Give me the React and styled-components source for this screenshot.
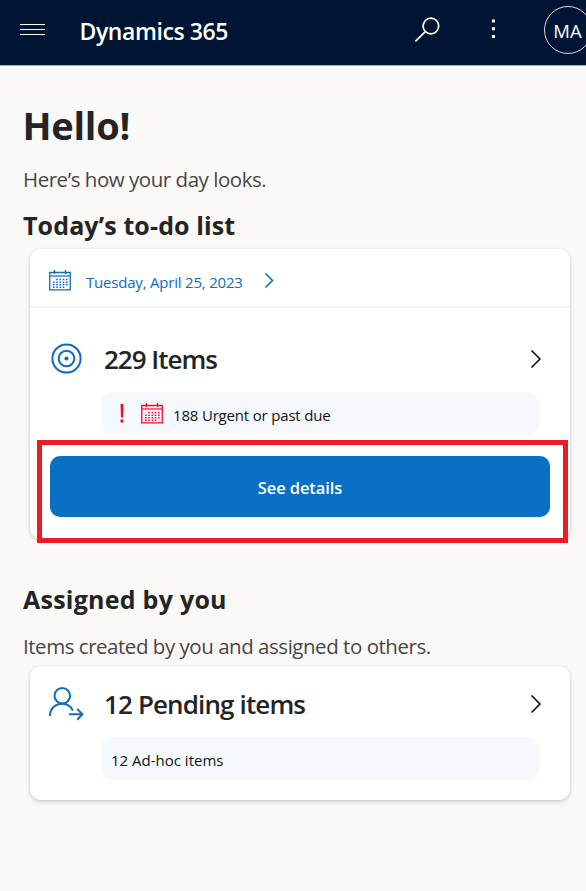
import React from 'react';
import styled, { createGlobalStyle } from 'styled-components';

const Global = createGlobalStyle`
  * { box-sizing: border-box; }
  body { margin: 0; background: #faf9f8; font-family: "Open Sans", "Noto Sans", sans-serif; overflow: hidden; }
  h1, h2, h3, p { margin: 0; }
  button { font: inherit; border: 0; background: none; padding: 0; }
  svg { display: block; flex: none; overflow: visible; }
`;
const Page = styled.div`
  width: 586px;
  height: 891px;
  overflow: hidden;
  color: #242424;
`;
const TopBar = styled.header`
  display: flex;
  align-items: flex-start;
  height: 66px;
  padding-left: 20px;
  background: #001433;
  border-bottom: 1px solid #a3a9b3;
  color: #fff;
`;
const MenuButton = styled.button`
  flex: none;
  margin-top: 23px;
  width: 25px;
`;
const Brand = styled.div`
  flex: none;
  margin-left: 34.5px;
  width: 335px;
  line-height: 63px;
  font-size: 23px;
  font-weight: 600;
  letter-spacing: -0.42px;
`;
const SearchButton = styled.button`
  flex: none;
  margin-top: 17px;
  width: 26px;
`;
const MoreButton = styled.button`
  flex: none;
  margin: 19px 0 0 50px;
  width: 5px;
`;
const Avatar = styled.div`
  flex: none;
  margin: 6px 0 0 48px;
  width: 48px;
  height: 48px;
  border: 1.5px solid #d5d9df;
  border-radius: 50%;
  text-align: center;
  font-size: 18.5px;
  line-height: 47px;
`;
const Main = styled.main`
  padding: 29px 16px 0 23px;
`;
const Greeting = styled.h1`
  margin-left: -0.5px;
  font-size: 38px;
  line-height: 60px;
  font-weight: 700;
  letter-spacing: -0.25px;
`;
const Lead = styled.p`
  padding-top: ${(p) => p.$offset || 0}px;
  height: ${(p) => p.$height}px;
  line-height: ${(p) => p.$line}px;
  font-size: 20.5px;
  letter-spacing: -0.47px;
  color: #484644;
  white-space: nowrap;
`;
const SectionTitle = styled.h2`
  height: ${(p) => p.$height}px;
  line-height: ${(p) => p.$line}px;
  font-size: 25px;
  font-weight: 700;
  letter-spacing: ${(p) => p.$spacing}px;
`;
const Card = styled.section`
  position: relative;
  margin-left: 7px;
  width: 540px;
  height: ${(p) => p.$height}px;
  background: #fff;
  border-radius: 11px;
  box-shadow: 0 2px 4px rgba(0, 0, 0, 0.16), 0 0 2px rgba(0, 0, 0, 0.1);
  margin-bottom: 38px;
`;
const DateRow = styled.div`
  display: flex;
  align-items: center;
  height: 59px;
  padding: 6px 0 0 19px;
  border-bottom: 2px solid #f3f3f3;
  color: #0f6cbd;
`;
const DateText = styled.span`
  margin: 2px 0 0 15px;
  width: 179px;
  font-size: 15px;
  letter-spacing: -0.2px;
  white-space: nowrap;
`;
const SummaryRow = styled.div`
  display: flex;
  align-items: center;
  height: ${(p) => p.$height}px;
  padding: ${(p) => p.$top}px 29.5px 0 19px;
  color: #111;
`;
const IconSlot = styled.div`
  width: 55px;
  padding-left: ${(p) => p.$inset || 0}px;
`;
const SummaryTitle = styled.h3`
  flex: 1;
  font-size: 26px;
  line-height: 36px;
  font-weight: 600;
  letter-spacing: ${(p) => p.$spacing}px;
  color: #242424;
`;
const Pill = styled.div`
  display: flex;
  align-items: center;
  margin-left: 71px;
  width: 439px;
  height: 43px;
  padding: 3px 0 0 ${(p) => p.$inset}px;
  border-radius: 12px;
  background: #f5f9fe;
  color: #111;
  font-size: 15px;
  letter-spacing: ${(p) => p.$spacing}px;
`;
const PillIcons = styled.span`
  display: flex;
  align-items: center;
  gap: 17px;
  margin: -4px 10px 0 0;
  color: #fb0624;
`;
const PrimaryButton = styled.button`
  display: block;
  margin: 21px 0 0 20px;
  width: 500px;
  height: 61px;
  padding-top: 1px;
  border-radius: 10px;
  background: #0a70c3;
  color: #fff;
  font-size: 16.5px;
  font-weight: 600;
  letter-spacing: -0.1px;
`;
const Highlight = styled.div`
  position: absolute;
  left: 7px;
  top: 191px;
  width: 531px;
  height: 103px;
  border: 5px solid #ed1c24;
`;

const Calendar = () => (
  <svg width="22" height="21" viewBox="0 0 22 21" fill="none" stroke="currentColor">
    <path d="M.75 2.5h20.5v17.3H.75z" strokeWidth="1.3" />
    <path d="M1 6h20" strokeWidth="1.2" />
    <path d="M5.5 0v4M16.5 0v4" strokeWidth="1.3" />
    <path d="M7.2 9.5h11.5M4 12.2h14.7M4 14.8h14.7M4 17.3h11.5" strokeWidth="1.4" strokeDasharray="1.6 1.65" />
  </svg>
);
const Chevron = ({ size = 17 }) => (
  <svg width={size / 2 + 1} height={size + 1} viewBox={`0 0 ${size / 2 + 1} ${size + 1}`} fill="none" stroke="currentColor" strokeWidth="1.6">
    <path d={`M.5 .5 L${size / 2 + 0.5} ${size / 2 + 0.5} L.5 ${size + 0.5}`} />
  </svg>
);
const Target = () => (
  <svg width="31" height="31" viewBox="0 0 31 31" fill="none" stroke="#0f6cbd" strokeWidth="2">
    <circle cx="15.5" cy="15.5" r="14.1" />
    <circle cx="15.5" cy="15.5" r="7.8" />
    <circle cx="15.5" cy="15.5" r="2.1" fill="#0f6cbd" stroke="none" />
  </svg>
);
const PersonArrow = () => (
  <svg width="34" height="33" viewBox="0 0 34 33" fill="none" stroke="#0f6cbd" strokeWidth="2">
    <circle cx="13.3" cy="7.7" r="7.8" />
    <path d="M1 28C1 20.5 6.5 15.8 13.3 15.8c4.7 0 8.4 2.6 10.6 6.7M20 26.3h13M28.2 20.9l5.2 5.4-5.2 5.4" />
  </svg>
);

export default function App() {
  return (
    <Page>
      <Global />
      <TopBar>
        <MenuButton aria-label="Menu">
          <svg width="25" height="13" viewBox="0 0 25 13" stroke="#fff"><path d="M0 1.5h25M0 6.5h25M0 11.5h25" /></svg>
        </MenuButton>
        <Brand>Dynamics 365</Brand>
        <SearchButton aria-label="Search">
          <svg width="25" height="25" viewBox="0 0 25 25" fill="none" stroke="#fff" strokeWidth="1.7">
            <circle cx="15.9" cy="9" r="7.8" /><path d="M10.3 14.7.4 24.3" />
          </svg>
        </SearchButton>
        <MoreButton aria-label="More">
          <svg width="5" height="20" viewBox="0 0 5 20" fill="#fff"><path d="M1 .5h3v3H1zM1 8.2h3v3H1zM1 16h3v3H1z" /></svg>
        </MoreButton>
        <Avatar>MA</Avatar>
      </TopBar>
      <Main>
        <Greeting>Hello!</Greeting>
        <Lead $height={47} $line={46} $offset={1}>Here’s how your day looks.</Lead>
        <SectionTitle $height={47} $line={47} $spacing={0.12}>Today’s to-do list</SectionTitle>
        <Card $height={290}>
          <DateRow>
            <Calendar />
            <DateText>Tuesday, April 25, 2023</DateText>
            <Chevron size={14} />
          </DateRow>
          <SummaryRow $height={84} $top={17}>
            <IconSlot $inset={2}><Target /></IconSlot>
            <SummaryTitle $spacing={-1}>229 Items</SummaryTitle>
            <Chevron />
          </SummaryRow>
          <Pill $inset={19} $spacing={-0.18}>
            <PillIcons>
              <svg width="4" height="19" viewBox="0 0 4 19" fill="currentColor"><path d="M.5 0h3L3 13.5H1zM.5 15.5h3v3h-3z" /></svg>
              <Calendar />
            </PillIcons>
            188 Urgent or past due
          </Pill>
          <PrimaryButton>See details</PrimaryButton>
          <Highlight />
        </Card>
        <SectionTitle $height={46} $line={44} $spacing={0.25}>Assigned by you</SectionTitle>
        <Lead $height={43} $line={40} $offset={3}>Items created by you and assigned to others.</Lead>
        <Card $height={134}>
          <SummaryRow $height={71} $top={5}>
            <IconSlot><PersonArrow /></IconSlot>
            <SummaryTitle $spacing={-0.87}>12 Pending items</SummaryTitle>
            <Chevron />
          </SummaryRow>
          <Pill $inset={10} $spacing={0}>12 Ad-hoc items</Pill>
        </Card>
      </Main>
    </Page>
  );
}
